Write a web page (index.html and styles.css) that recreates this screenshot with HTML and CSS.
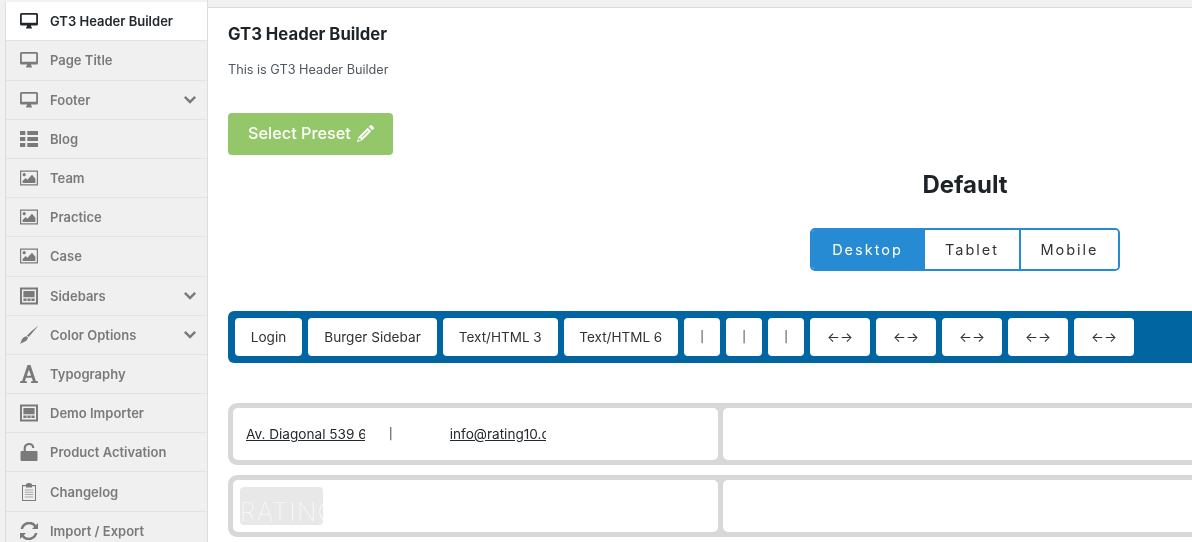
FILE: index.html
```html
<!DOCTYPE html>
<html lang="en">
<head>
<meta charset="utf-8">
<title>GT3 Header Builder</title>
<link rel="stylesheet" href="styles.css">
</head>
<body>
<svg class="sprite" width="0" height="0" aria-hidden="true">
  <symbol id="i-desktop" viewBox="0 0 18 16"><path d="M1.500 0h15A1.500 1.500 0 0 1 18 1.500v9.600a1.500 1.500 0 0 1-1.500 1.500H11c0 1 .4 1.500 1 2.200v.7H6v-.7c.6-.7 1-1.200 1-2.200H1.500A1.500 1.500 0 0 1 0 11.100V1.500A1.500 1.500 0 0 1 1.500 0zm.3 1.800v7.900h14.400V1.800z"/></symbol>
  <symbol id="i-list" viewBox="0 0 18 16"><path d="M0 0h5.300v4H0zM7.300 0H18v4H7.300zM0 6h5.300v4H0zM7.300 6H18v4H7.300zM0 12h5.300v4H0zM7.300 12H18v4H7.300z"/></symbol>
  <symbol id="i-picture" viewBox="0 0 18 15"><path fill-rule="evenodd" d="M0 0h18v15H0zm1.200 1.200v12.600h15.600V1.200z"/><circle cx="4.200" cy="4.200" r="1.600"/><path d="M2.600 12.400v-2l3-3 1.800 1.800 4.600-5 3.400 4v4.200z"/></symbol>
  <symbol id="i-layout" viewBox="0 0 18 17"><path fill-rule="evenodd" d="M0 0h18v17H0zm2 2v13h14V2z"/><path d="M3.400 3.400h11.200v6.400H3.400zM3.400 11h3.200v2.600H3.400zM7.400 11h3.200v2.600H7.400zM11.400 11h3.200v2.600h-3.200z"/></symbol>
  <symbol id="i-brush" viewBox="0 0 18 18"><path d="M18 0C15.500 3 11 8.500 8.600 11L7 9.600C9.600 6.700 15 2 18 0z"/><path d="M6.500 10.200L8 11.800C7.500 14 5.500 15.800 3.500 16.200 2.400 16.500 1 17.200 0 18 .6 17 1.100 15.500 1.600 14 2.300 12 4.300 10.400 6.500 10.200z"/></symbol>
  <symbol id="i-font" viewBox="0 0 18 18"><path fill-rule="evenodd" d="M7.500 0h3l5.300 15.800 2.200.6V18h-7v-1.600l1.800-.4-1-3.200H6l-1 3.200 1.900.4V18H0v-1.600l2.200-.6zM8.900 4.700 6.800 10.800h4.300z"/></symbol>
  <symbol id="i-unlock" viewBox="0 0 16 17"><path d="M3 7.500V5.200C3 2.200 4.900 0 8.200 0 11.200 0 13 2 13 4.800h-2C11 3.200 10 2 8.200 2 6.200 2 5 3.300 5 5.300v2.200h10a1 1 0 0 1 1 1V16a1 1 0 0 1-1 1H1a1 1 0 0 1-1-1V8.500a1 1 0 0 1 1-1z"/></symbol>
  <symbol id="i-clip" viewBox="0 0 14 18"><path fill-rule="evenodd" d="M0 2h4V.8h1.500V0h3v.8H10V2h4v16H0zm1 1.300v13.700h12V3.300H10v1.200H4V3.300z"/><path fill-opacity=".6" d="M2.800 6.500h8.400v1H2.800zM2.800 8.800h8.400v1H2.800zM2.800 11.100h8.400v1H2.800zM2.800 13.400h8.400v1H2.800z"/></symbol>
  <symbol id="i-refresh" viewBox="0 0 18 18"><path d="M18 1v6h-6l2.200-2.200A6.300 6.300 0 0 0 3.100 6.900H.6A8.800 8.800 0 0 1 16 3zM0 17v-6h6l-2.200 2.200a6.300 6.300 0 0 0 11.100-2.100h2.500A8.800 8.800 0 0 1 2 15z"/></symbol>
  <symbol id="i-chev" viewBox="0 0 12 8"><path d="M1.700 0 6 4.300 10.300 0 12 1.700 6 7.700 0 1.700z"/></symbol>
  <symbol id="i-pencil" viewBox="0 0 17 17"><path fill-rule="evenodd" d="M11.700 1.800 12.800.7a1.800 1.800 0 0 1 2.500 0l1 1a1.800 1.800 0 0 1 0 2.500l-1.100 1.100zM10.700 2.800l3.500 3.500-9 9-4.400 1.600a.6.6 0 0 1-.7-.7l1.600-4.400zM10.800 5.400l-6.300 6.300.7.7 6.300-6.300zM2 12.900l-.8 2.900 2.900-.8-.6-1.500z"/></symbol>
</svg>
<div class="page">
  <nav class="sidebar">
    <a class="item active"><svg class="ic"><use href="#i-desktop"/></svg><span>GT3 Header Builder</span></a>
    <a class="item"><svg class="ic"><use href="#i-desktop"/></svg><span>Page Title</span></a>
    <a class="item"><svg class="ic"><use href="#i-desktop"/></svg><span>Footer</span><svg class="chev"><use href="#i-chev"/></svg></a>
    <a class="item"><svg class="ic"><use href="#i-list"/></svg><span>Blog</span></a>
    <a class="item"><svg class="ic"><use href="#i-picture"/></svg><span>Team</span></a>
    <a class="item"><svg class="ic"><use href="#i-picture"/></svg><span>Practice</span></a>
    <a class="item"><svg class="ic"><use href="#i-picture"/></svg><span>Case</span></a>
    <a class="item"><svg class="ic"><use href="#i-layout"/></svg><span>Sidebars</span><svg class="chev"><use href="#i-chev"/></svg></a>
    <a class="item"><svg class="ic"><use href="#i-brush"/></svg><span>Color Options</span><svg class="chev"><use href="#i-chev"/></svg></a>
    <a class="item"><svg class="ic"><use href="#i-font"/></svg><span>Typography</span></a>
    <a class="item"><svg class="ic"><use href="#i-layout"/></svg><span>Demo Importer</span></a>
    <a class="item"><svg class="ic"><use href="#i-unlock"/></svg><span>Product Activation</span></a>
    <a class="item"><svg class="ic"><use href="#i-clip"/></svg><span>Changelog</span></a>
    <a class="item"><svg class="ic"><use href="#i-refresh"/></svg><span>Import / Export</span></a>
  </nav>
  <main class="main">
    <div class="topstrip"></div>
    <div class="content">
      <h1 class="title">GT3 Header Builder</h1>
      <p class="desc">This is GT3 Header Builder</p>
      <button class="preset">Select Preset <svg class="pencil"><use href="#i-pencil"/></svg></button>
      <h2 class="preset-name">Default</h2>
      <div class="tabs-wrap">
        <div class="tabs">
          <div class="tab on">Desktop</div>
          <div class="tab">Tablet</div>
          <div class="tab">Mobile</div>
        </div>
      </div>
      <div class="pool">
        <div class="chip login">Login</div>
        <div class="chip burger">Burger Sidebar</div>
        <div class="chip html">Text/HTML 3</div>
        <div class="chip html">Text/HTML 6</div>
        <div class="chip sep">|</div>
        <div class="chip sep">|</div>
        <div class="chip sep">|</div>
        <div class="chip arrows">←→</div>
        <div class="chip arrows">←→</div>
        <div class="chip arrows">←→</div>
        <div class="chip arrows">←→</div>
        <div class="chip arrows">←→</div>
      </div>
      <div class="grid-row first">
        <div class="cell side">
          <a class="clip addr">Av. Diagonal 539 6</a>
          <span class="bar">|</span>
          <a class="clip mail">info@rating10.com</a>
        </div>
        <div class="cell"></div>
      </div>
      <div class="grid-row">
        <div class="cell side">
          <div class="logo"><span>RATING</span></div>
        </div>
        <div class="cell"></div>
      </div>
    </div>
  </main>
</div>
</body>
</html>
```
FILE: styles.css
```css
* { box-sizing: border-box; }
html, body { margin: 0; height: 100%; overflow: hidden; background: #fff; }
body { font-family: Inter, "Liberation Sans", sans-serif; color: #23282d; }
.sprite { position: absolute; }
.page { display: flex; width: 1192px; height: 542px; overflow: hidden; background: #f1f1f1; will-change: transform; }

.sidebar { flex: 0 0 208px; padding: 2.2px 0 0 5px; background: #f1f1f1; border-right: 1px solid #dcdcdc; display: flex; flex-direction: column; overflow: hidden; }
.item { flex: 0 0 39.2px; display: flex; align-items: center; padding: 0 11px 0 14px; font-size: 13px; font-weight: 600; color: #7a7a7a; background: #f0f0f0; border-left: 1px solid #dcdcdc; border-bottom: 1px solid #e3e3e3; }
.item.active { color: #23282d; background: #fff; }
.ic { width: 18px; height: 18px; margin-right: 12px; fill: currentColor; flex: none; }
.chev { width: 12px; height: 8px; margin-left: auto; fill: currentColor; flex: none; }

.main { flex: 0 0 1514px; background: #fff; }
.topstrip { height: 8px; background: #f1f1f1; border-bottom: 1px solid #dcdcdc; }
.content { padding: 0 20px; }
.title { margin: 16px 0 0; font-size: 16.7px; line-height: 20px; font-weight: 700; color: #1d2327; }
.desc { margin: 17px 0 0; font-size: 12.7px; line-height: 18px; color: #50575e; }
.preset { display: flex; align-items: center; gap: 6px; margin: 34px 0 0; width: 165px; height: 42px; padding: 0 0 2px 20px; border: 0; border-radius: 4px; background: #93c76a; color: #fff; font: 500 16.3px Inter, sans-serif; }
.pencil { width: 17px; height: 17px; fill: #fff; }
.preset-name { margin: 16px 0 0; text-align: center; font-size: 24px; line-height: 28px; font-weight: 700; color: #1d2327; }
.tabs-wrap { display: flex; justify-content: center; margin-top: 29px; }
.tabs { display: flex; width: 310px; height: 43px; border: 2px solid #268bd2; border-radius: 5px; overflow: hidden; }
.tab { display: flex; align-items: center; justify-content: center; flex: 1 1 auto; font-size: 14.5px; letter-spacing: 2px; color: #333; background: #fff; }
.tab + .tab { border-left: 2px solid #268bd2; }
.tab.on { flex: 0 0 111px; background: #268bd2; color: #fff; }
.tab:nth-child(2) { flex: 0 0 96px; }

.pool { display: flex; gap: 6px; margin-top: 40px; height: 52px; padding: 7px; background: #0065a0; border-radius: 6px; }
.chip { display: flex; align-items: center; justify-content: center; flex: none; height: 38px; border-radius: 4px; background: #fff; font-size: 13.6px; color: #333; white-space: nowrap; }
.chip.login { width: 67px; }
.chip.burger { width: 129px; }
.chip.html { width: 114.5px; font-size: 13.5px; }
.chip.sep { width: 36px; color: #333; font-size: 11px; }
.chip.arrows { width: 60px; }

.grid-row { display: grid; grid-template-columns: 485px 1fr; gap: 5px; height: 62px; margin-top: 10px; padding: 5px; background: #d8d8d8; border-radius: 9px; }
.grid-row.first { margin-top: 40px; }
.cell { background: #fff; border-radius: 5px; }
.cell.side { display: flex; align-items: center; padding-left: 13px; font-size: 13.6px; color: #23282d; }
.clip { display: block; overflow: hidden; white-space: nowrap; text-decoration: underline; }
.addr { width: 119px; }
.bar { margin-left: 24px; font-size: 11px; }
.mail { width: 96px; margin-left: 57px; }
.cell.side .logo { flex: none; width: 83px; height: 38px; margin-left: -6px; background: #e8e8e8; border-radius: 4px; overflow: hidden; display: flex; align-items: flex-end; color: #fff; font-size: 25px; font-weight: 100; letter-spacing: 1.5px; line-height: 25px; white-space: nowrap; }
```
